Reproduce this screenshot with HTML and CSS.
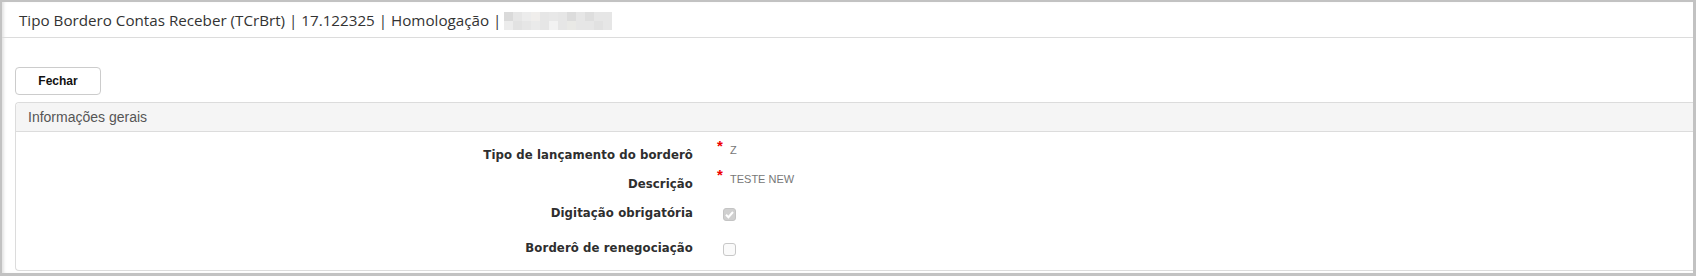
FILE: index.html
```
<!DOCTYPE html>
<html lang="pt-BR">
<head>
    <meta charset="UTF-8">
    <title>Tipo Bordero Contas Receber</title>
    <link rel="stylesheet" href="styles.css">
</head>
<body>
    <div class="window">
        <div class="title-bar">
            <span class="title">Tipo Bordero Contas Receber (TCrBrt) | 17.122325 | Homologação |</span>
            <span class="redacted">
                <i></i><i></i><i></i><i></i><i></i><i></i><i></i><i></i><i></i><i></i><i></i><i></i>
                <i></i><i></i><i></i><i></i><i></i><i></i><i></i><i></i><i></i><i></i><i></i><i></i>
            </span>
        </div>

        <div class="content">
            <div class="toolbar">
                <button class="btn">Fechar</button>
            </div>

            <div class="panel">
                <div class="panel-heading">Informações gerais</div>
                <div class="panel-body">
                    <div class="field">
                        <label class="field-label">Tipo de lançamento do borderô</label>
                        <span class="req">*</span>
                        <span class="value">Z</span>
                    </div>
                    <div class="field">
                        <label class="field-label">Descrição</label>
                        <span class="req">*</span>
                        <span class="value">TESTE NEW</span>
                    </div>
                    <div class="field field-tall">
                        <label class="field-label">Digitação obrigatória</label>
                        <span class="check checked">
                            <svg width="11" height="11" viewBox="0 0 11 11"><path d="M2 5.8 L4.4 8.2 L9 3" fill="none" stroke="#fff" stroke-width="2"/></svg>
                        </span>
                    </div>
                    <div class="field">
                        <label class="field-label">Borderô de renegociação</label>
                        <span class="check"></span>
                    </div>
                </div>
            </div>
        </div>
    </div>
</body>
</html>
```

FILE: styles.css
```
body {
    margin: 0;
    padding: 0;
    background-color: #fff;
    font-family: "Liberation Sans", Arial, sans-serif;
    color: #333;
}

.window {
    height: 276px;
    box-sizing: border-box;
    border-top: 2px solid #c2c2c2;
    border-left: 2px solid #c2c2c2;
    border-right: 3px solid #c2c2c2;
    border-bottom: 3px solid #c2c2c2;
    box-shadow: inset 3px 0 3px -1px #e4e4e4;
    overflow: hidden;
}

.title-bar {
    height: 35px;
    border-bottom: 1px solid #dcdcdc;
    display: flex;
    align-items: center;
    padding-left: 17px;
}

.title {
    font-family: "Open Sans", "Noto Sans", sans-serif;
    font-size: 15.2px;
    color: #333;
}

.redacted {
    display: grid;
    grid-template-columns: repeat(12, 9px);
    grid-template-rows: 9px 9px;
    margin-left: 3px;
    margin-top: 2px;
}

.redacted i {
    background-color: #e6e6e6;
}

.redacted i:nth-child(1) { background-color: #dadada; }
.redacted i:nth-child(3) { background-color: #ececec; }
.redacted i:nth-child(4) { background-color: #f0eeec; }
.redacted i:nth-child(6) { background-color: #e8e8e8; }
.redacted i:nth-child(8) { background-color: #dcdcdc; }
.redacted i:nth-child(10) { background-color: #dedede; }
.redacted i:nth-child(13) { background-color: #ececec; }
.redacted i:nth-child(14) { background-color: #e2e2e2; }
.redacted i:nth-child(16) { background-color: #eaeaea; }
.redacted i:nth-child(18) { background-color: #f2f2f2; }
.redacted i:nth-child(20) { background-color: #e9e9e6; }
.redacted i:nth-child(23) { background-color: #e1e1e1; }

.content {
    padding: 29px 0 0 13px;
}

.btn {
    width: 86px;
    height: 28px;
    background-color: #fff;
    border: 1px solid #ccc;
    border-radius: 4px;
    font-family: "Liberation Sans", Arial, sans-serif;
    font-size: 12px;
    font-weight: bold;
    color: #111;
    padding: 0;
    cursor: pointer;
}

.panel {
    margin-top: 7px;
    border: 1px solid #dcdcdc;
    border-right: none;
    border-radius: 4px 0 0 4px;
    height: 169px;
    box-sizing: border-box;
}

.panel-heading {
    height: 28px;
    background-color: #f5f5f5;
    border-bottom: 1px solid #dcdcdc;
    border-radius: 4px 0 0 0;
    padding-left: 12px;
    font-size: 14px;
    line-height: 28px;
    color: #555;
}

.panel-body {
    padding-top: 7px;
}

.field {
    display: flex;
    align-items: flex-start;
    height: 29px;
}

.field-tall {
    height: 35px;
}

.field-label {
    width: 677px;
    text-align: right;
    padding-top: 8px;
    font-family: "DejaVu Sans Condensed", "DejaVu Sans", sans-serif;
    font-size: 13px;
    font-weight: bold;
    line-height: 16px;
    letter-spacing: 0.1px;
    color: #2e2e2e;
}

.req {
    margin-left: 24px;
    width: 13px;
    margin-top: 0;
    font-size: 15px;
    line-height: 14px;
    font-weight: bold;
    color: #e00;
}

.value {
    margin-top: 4px;
    font-size: 11px;
    line-height: 14px;
    color: #777;
}

.check {
    margin-left: 30px;
    margin-top: 11px;
    width: 13px;
    height: 13px;
    box-sizing: border-box;
    border: 1px solid #c8c8c8;
    border-radius: 3px;
    background-color: #fafafa;
    display: flex;
    align-items: center;
    justify-content: center;
}

.check.checked {
    background-color: #d0d0d0;
    border-color: #c4c4c4;
}
```
